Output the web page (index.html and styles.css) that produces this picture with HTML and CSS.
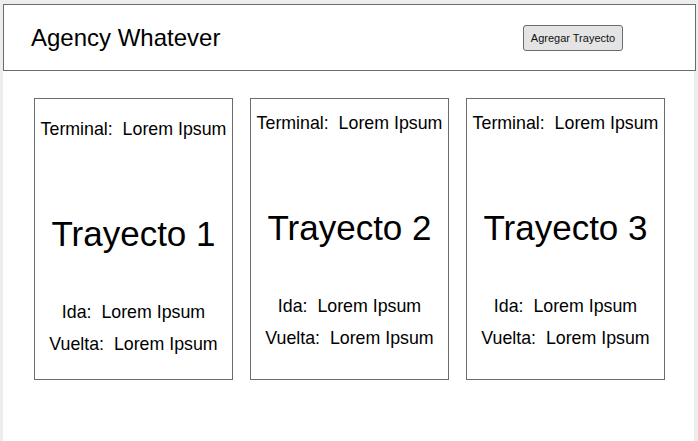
FILE: index.html
```html
<!DOCTYPE html>
<html lang="es">
<head>
<meta charset="utf-8">
<title>Agency Whatever</title>
<link rel="stylesheet" href="styles.css">
</head>
<body>
<div class="app">
  <header class="header">
    <h1 class="brand">Agency Whatever</h1>
    <button class="btn">Agregar Trayecto</button>
  </header>
  <main class="cards">
    <section class="card card-first">
      <p class="line">Terminal:  Lorem Ipsum</p>
      <h2 class="title">Trayecto 1</h2>
      <p class="line">Ida:  Lorem Ipsum</p>
      <p class="line">Vuelta:  Lorem Ipsum</p>
    </section>
    <section class="card">
      <p class="line">Terminal:  Lorem Ipsum</p>
      <h2 class="title">Trayecto 2</h2>
      <p class="line">Ida:  Lorem Ipsum</p>
      <p class="line">Vuelta:  Lorem Ipsum</p>
    </section>
    <section class="card">
      <p class="line">Terminal:  Lorem Ipsum</p>
      <h2 class="title">Trayecto 3</h2>
      <p class="line">Ida:  Lorem Ipsum</p>
      <p class="line">Vuelta:  Lorem Ipsum</p>
    </section>
  </main>
</div>
</body>
</html>
```

FILE: styles.css
```css
html, body {
  margin: 0;
  padding: 0;
  background: #ededed;
  height: 100%;
}
body {
  font-family: "Liberation Sans", Arial, sans-serif;
  color: #000;
  overflow: hidden;
}
.app {
  margin: 4px 0 0 3px;
  width: 691px;
  height: 437px;
  background: #fff;
  display: flex;
  flex-direction: column;
}
.header {
  width: 691px;
  height: 65px;
  border: 1px solid #6b6b6b;
  background: #fff;
  display: flex;
  align-items: center;
  box-sizing: content-box;
}
.brand {
  margin: 0 0 0 27px;
  font-size: 24px;
  line-height: 28px;
  font-weight: normal;
  flex: 1;
}
.btn {
  margin: 0 72px 0 0;
  width: 100px;
  height: 26px;
  padding: 0;
  border: 1px solid #6b6b6b;
  border-radius: 3px;
  background: #e4e4e4;
  font-family: "Liberation Sans", Arial, sans-serif;
  font-size: 11px;
  color: #111;
}
.cards {
  display: flex;
  gap: 17px;
  padding: 27px 0 0 31px;
}
.card {
  width: 197px;
  border: 1px solid #6b6b6b;
  display: flex;
  flex-direction: column;
  align-items: center;
  padding-top: 14px;
  box-sizing: content-box;
  height: 266px;
}
.card-first {
  padding-top: 20px;
  height: 260px;
}
.line {
  margin: 0;
  font-size: 17.8px;
  line-height: 20px;
  white-space: pre;
}
.title {
  margin: 75px 0 48px;
  font-size: 35px;
  font-weight: normal;
  line-height: 40px;
}
.title + .line {
  margin-bottom: 12px;
}
```
